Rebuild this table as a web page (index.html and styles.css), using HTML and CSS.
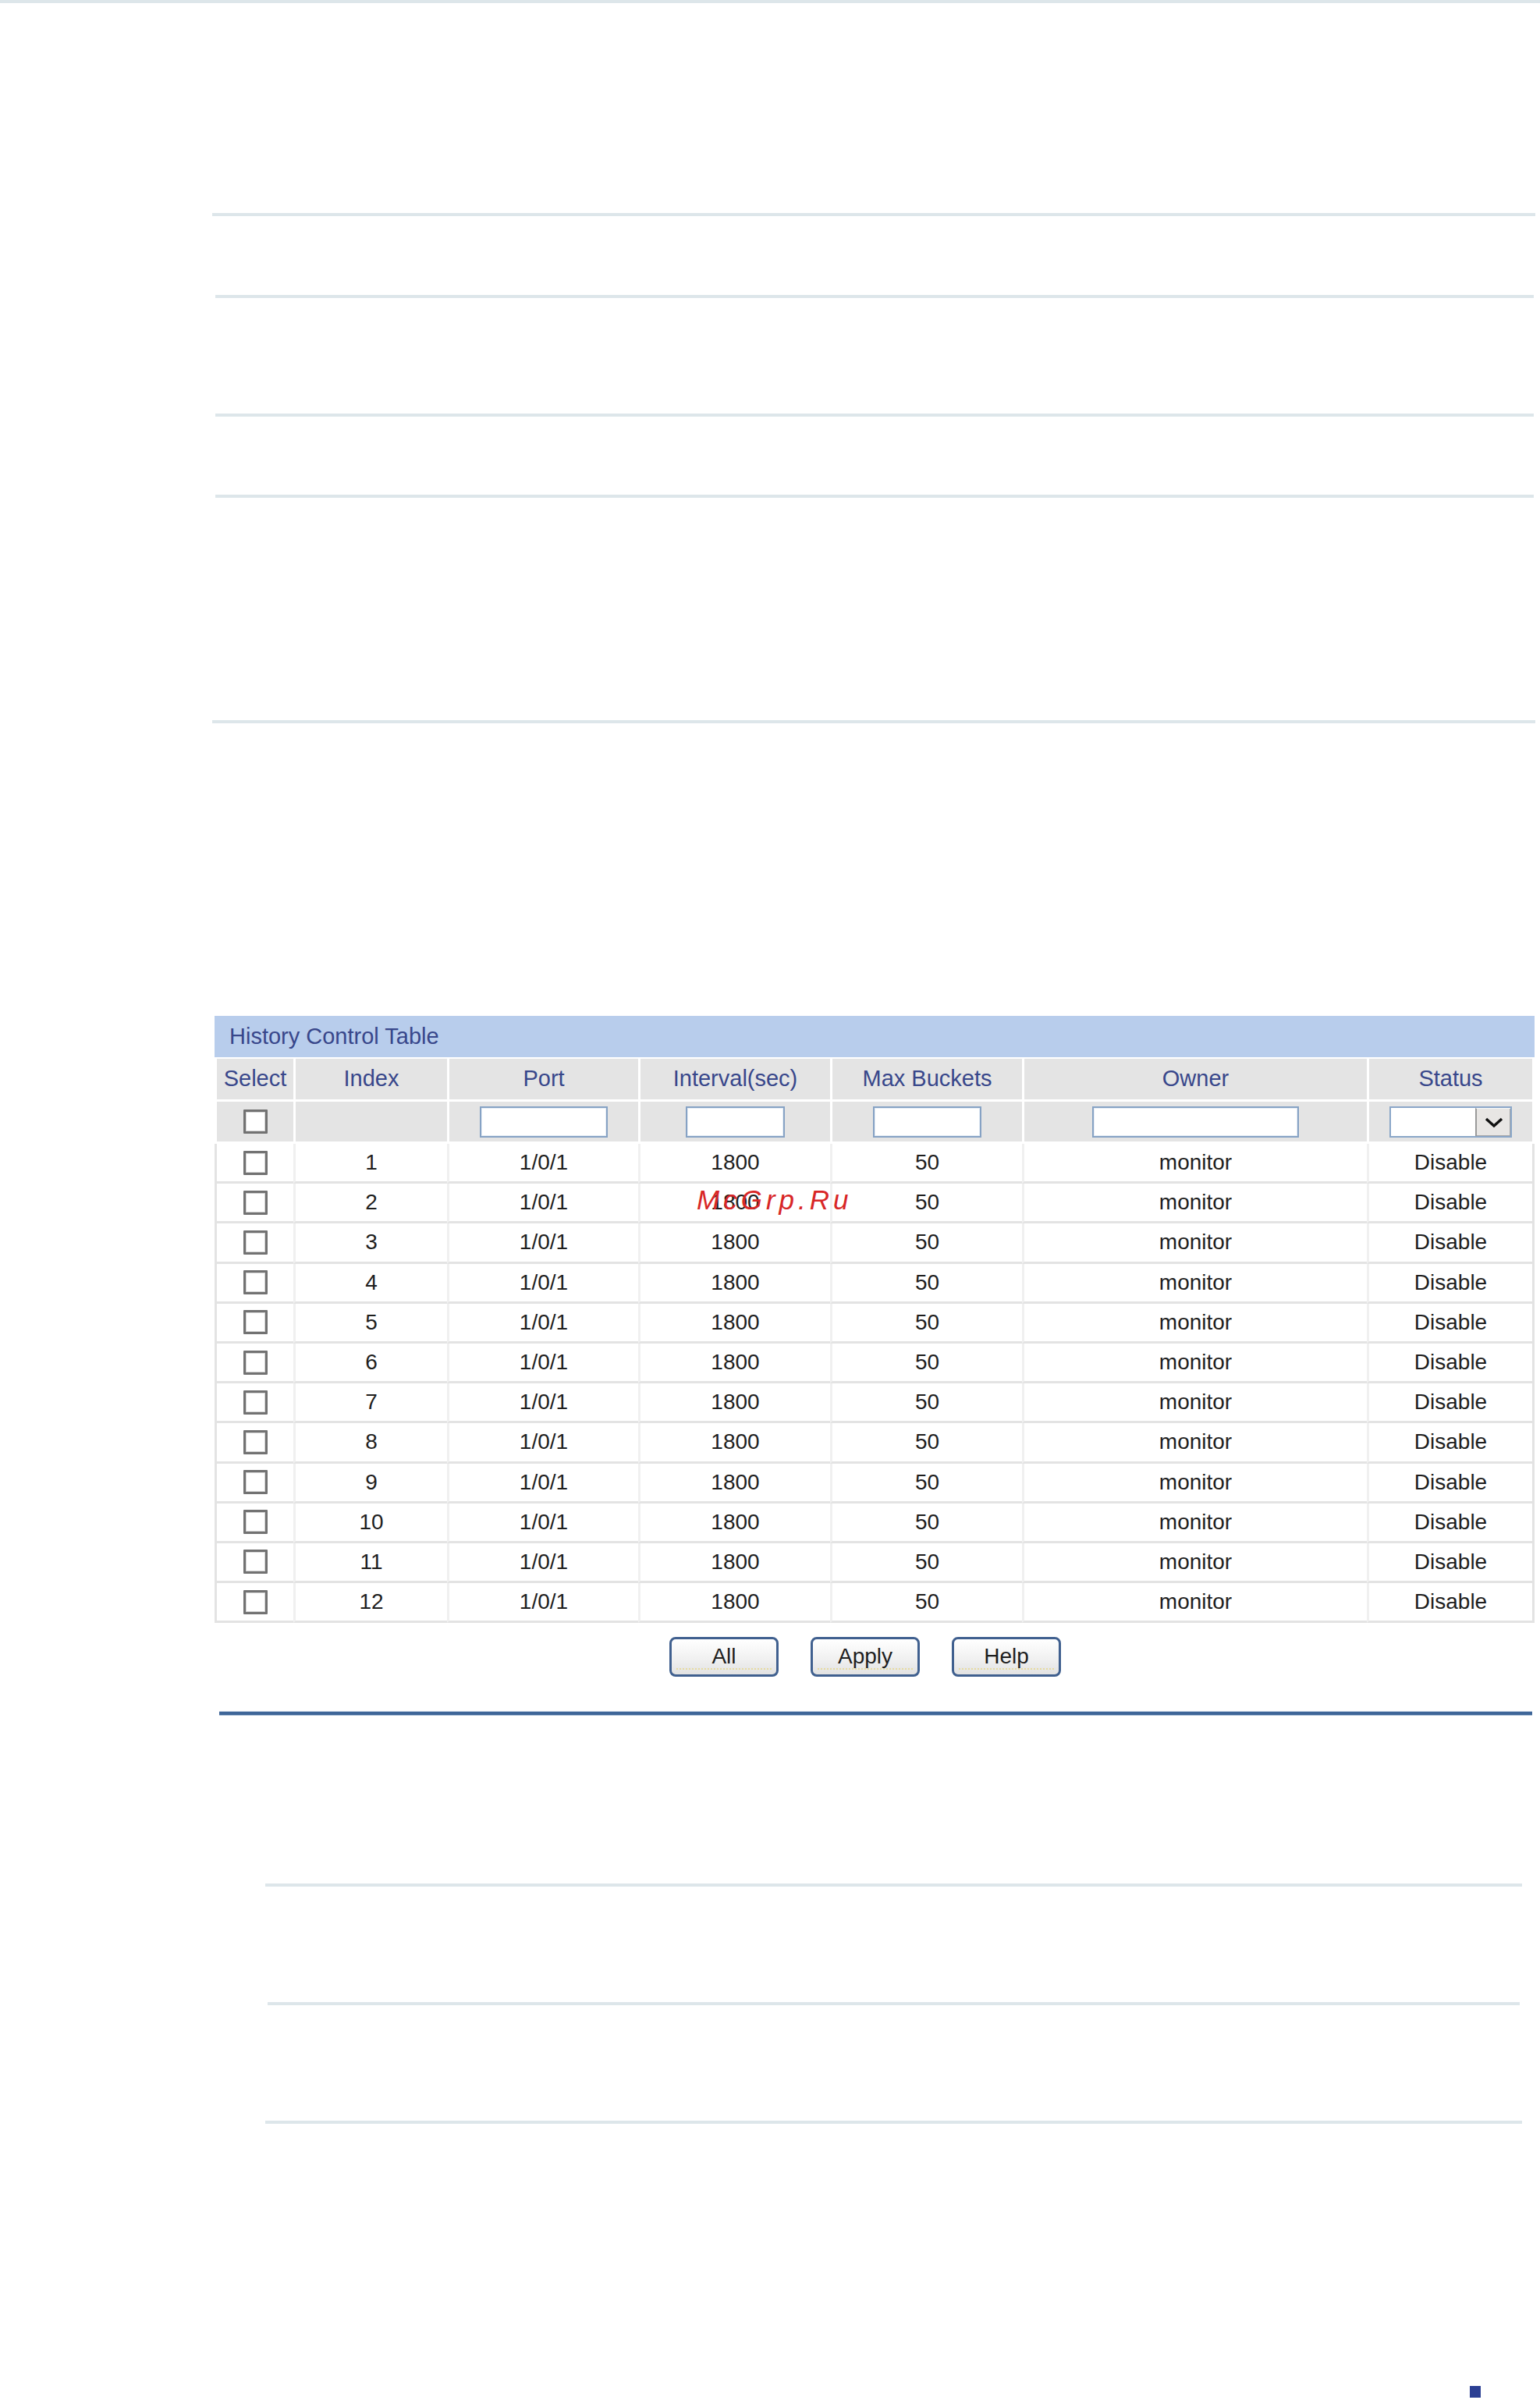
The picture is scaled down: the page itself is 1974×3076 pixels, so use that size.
FILE: index.html
```html
<!DOCTYPE html>
<html lang="en">
<head>
<meta charset="utf-8">
<title>History Control Table</title>
<link rel="stylesheet" href="styles.css">
</head>
<body>
<div class="page">
  <div class="topline"></div>
  <div class="rule rule-1"></div>
  <div class="rule rule-2"></div>
  <div class="rule rule-3"></div>
  <div class="rule rule-4"></div>
  <div class="rule rule-5"></div>

  <section class="panel">
    <div class="panel-title">History Control Table</div>
    <div class="grid">
      <div class="row head">
        <div class="cell">Select</div>
        <div class="cell">Index</div>
        <div class="cell">Port</div>
        <div class="cell">Interval(sec)</div>
        <div class="cell">Max Buckets</div>
        <div class="cell">Owner</div>
        <div class="cell">Status</div>
      </div>
      <div class="row filter">
        <div class="cell"><input type="checkbox" class="cb"></div>
        <div class="cell"></div>
        <div class="cell"><input type="text" class="field f-port"></div>
        <div class="cell"><input type="text" class="field f-interval"></div>
        <div class="cell"><input type="text" class="field f-max"></div>
        <div class="cell"><input type="text" class="field f-owner"></div>
        <div class="cell">
          <div class="select">
            <span class="select-value"></span>
            <span class="select-btn"><svg width="24" height="13" viewBox="0 0 24 13"><path d="M2 2 L12 11 L22 2" fill="none" stroke="#111" stroke-width="3.4"/></svg></span>
          </div>
        </div>
      </div>
      <div class="row data"><div class="cell"><input type="checkbox" class="cb"></div><div class="cell">1</div><div class="cell">1/0/1</div><div class="cell">1800</div><div class="cell">50</div><div class="cell">monitor</div><div class="cell">Disable</div></div>
      <div class="row data"><div class="cell"><input type="checkbox" class="cb"></div><div class="cell">2</div><div class="cell">1/0/1</div><div class="cell">1800</div><div class="cell">50</div><div class="cell">monitor</div><div class="cell">Disable</div></div>
      <div class="row data"><div class="cell"><input type="checkbox" class="cb"></div><div class="cell">3</div><div class="cell">1/0/1</div><div class="cell">1800</div><div class="cell">50</div><div class="cell">monitor</div><div class="cell">Disable</div></div>
      <div class="row data"><div class="cell"><input type="checkbox" class="cb"></div><div class="cell">4</div><div class="cell">1/0/1</div><div class="cell">1800</div><div class="cell">50</div><div class="cell">monitor</div><div class="cell">Disable</div></div>
      <div class="row data"><div class="cell"><input type="checkbox" class="cb"></div><div class="cell">5</div><div class="cell">1/0/1</div><div class="cell">1800</div><div class="cell">50</div><div class="cell">monitor</div><div class="cell">Disable</div></div>
      <div class="row data"><div class="cell"><input type="checkbox" class="cb"></div><div class="cell">6</div><div class="cell">1/0/1</div><div class="cell">1800</div><div class="cell">50</div><div class="cell">monitor</div><div class="cell">Disable</div></div>
      <div class="row data"><div class="cell"><input type="checkbox" class="cb"></div><div class="cell">7</div><div class="cell">1/0/1</div><div class="cell">1800</div><div class="cell">50</div><div class="cell">monitor</div><div class="cell">Disable</div></div>
      <div class="row data"><div class="cell"><input type="checkbox" class="cb"></div><div class="cell">8</div><div class="cell">1/0/1</div><div class="cell">1800</div><div class="cell">50</div><div class="cell">monitor</div><div class="cell">Disable</div></div>
      <div class="row data"><div class="cell"><input type="checkbox" class="cb"></div><div class="cell">9</div><div class="cell">1/0/1</div><div class="cell">1800</div><div class="cell">50</div><div class="cell">monitor</div><div class="cell">Disable</div></div>
      <div class="row data"><div class="cell"><input type="checkbox" class="cb"></div><div class="cell">10</div><div class="cell">1/0/1</div><div class="cell">1800</div><div class="cell">50</div><div class="cell">monitor</div><div class="cell">Disable</div></div>
      <div class="row data"><div class="cell"><input type="checkbox" class="cb"></div><div class="cell">11</div><div class="cell">1/0/1</div><div class="cell">1800</div><div class="cell">50</div><div class="cell">monitor</div><div class="cell">Disable</div></div>
      <div class="row data"><div class="cell"><input type="checkbox" class="cb"></div><div class="cell">12</div><div class="cell">1/0/1</div><div class="cell">1800</div><div class="cell">50</div><div class="cell">monitor</div><div class="cell">Disable</div></div>
    </div>
    <div class="actions">
      <button class="btn" type="button">All</button>
      <button class="btn" type="button">Apply</button>
      <button class="btn" type="button">Help</button>
    </div>
  </section>

  <div class="bluerule"></div>
  <div class="rule rule-6"></div>
  <div class="rule rule-7"></div>
  <div class="rule rule-8"></div>
  <div class="pagemark"></div>

  <span class="watermark">McGrp.Ru</span>
</div>
</body>
</html>
```

FILE: styles.css
```css
html, body {
  margin: 0;
  padding: 0;
  background: #ffffff;
}

body {
  font-family: "Liberation Sans", Arial, sans-serif;
  color: #222222;
}

.page {
  position: relative;
  width: 1974px;
  min-height: 3076px;
  overflow: hidden;
}

.topline {
  height: 4px;
  background: #dde6ea;
}

.rule {
  height: 4px;
  background: #dde6ea;
}

.rule-1 { margin: 269px 0 0 272px; width: 1696px; }
.rule-2 { margin: 101px 0 0 276px; width: 1690px; }
.rule-3 { margin: 148px 0 0 276px; width: 1690px; }
.rule-4 { margin: 100px 0 0 276px; width: 1690px; }
.rule-5 { margin: 285px 0 0 272px; width: 1696px; }

/* ---------- panel ---------- */
.panel {
  margin: 375px 0 0 275px;
  width: 1692px;
}

.panel-title {
  height: 53px;
  line-height: 53px;
  background: #b8cdec;
  color: #38478b;
  font-size: 29px;
  padding-left: 19px;
  margin-bottom: 2px;
}

.row {
  display: grid;
  grid-template-columns: 101px 197px 245px 246px 246px 442px 215px;
}

.cell {
  box-sizing: border-box;
  display: flex;
  align-items: center;
  justify-content: center;
  border-left: 3px solid #ffffff;
  border-bottom: 3px solid #ffffff;
  white-space: nowrap;
}

.cell:last-child {
  border-right: 3px solid #ffffff;
}

.head .cell {
  height: 55px;
  background: #e4e4e4;
  color: #38478b;
  font-size: 29px;
  padding-bottom: 2px;
}

.filter .cell {
  height: 54px;
  background: #e4e4e4;
}

.data .cell {
  height: 51.2px;
  background: #ffffff;
  font-size: 28px;
  color: #1e1e1e;
  border-left-color: #f0f0f0;
  border-bottom-color: #e3e3e3;
}

.data .cell:first-child {
  border-left-color: #e3e3e3;
}

.data .cell:last-child {
  border-right-color: #e3e3e3;
}

/* ---------- form controls ---------- */
.cb {
  -webkit-appearance: none;
  appearance: none;
  box-sizing: border-box;
  width: 31px;
  height: 31px;
  margin: 0;
  border: 3px solid #727272;
  border-radius: 1px;
  background: #ffffff;
  box-shadow: inset 0 0 0 1px #d4d4d4;
}

.field {
  box-sizing: border-box;
  height: 40px;
  margin: 0;
  padding: 0;
  border: 2px solid #86a2c4;
  background: #ffffff;
  box-shadow: inset 0 0 0 1px #e6edf5;
}

.f-port { width: 164px; }
.f-interval { width: 127px; }
.f-max { width: 139px; }
.f-owner { width: 265px; }

.select {
  box-sizing: border-box;
  display: flex;
  width: 157px;
  height: 40px;
  border: 2px solid #8aa6c8;
  background: #ffffff;
}

.select-value {
  flex: 1;
}

.select-btn {
  box-sizing: border-box;
  width: 45px;
  display: flex;
  align-items: center;
  justify-content: center;
  background: #e8e6e4;
  border-left: 2px solid #9a9a9a;
  border-top: 1px solid #f8f8f8;
  box-shadow: inset -1px -1px 0 #a8a8a8;
}

/* ---------- buttons ---------- */
.actions {
  display: flex;
  gap: 41px;
  padding: 18px 0 0 583px;
}

.btn {
  position: relative;
  box-sizing: border-box;
  width: 140px;
  height: 51px;
  margin: 0;
  padding: 0 0 2px;
  font-family: inherit;
  font-size: 28px;
  color: #1e1e1e;
  border: 3px solid #40608f;
  border-radius: 8px;
  background: linear-gradient(#ffffff 0%, #f1f1f1 55%, #e2e2e2 100%);
}

.btn::after {
  content: "";
  position: absolute;
  left: 6px;
  right: 6px;
  bottom: 6px;
  border-top: 2px dotted #e7dba0;
}

/* ---------- lower section ---------- */
.bluerule {
  margin: 44px 0 0 281px;
  width: 1683px;
  height: 6px;
  background: linear-gradient(#b3c4da 0, #b3c4da 1px, #3f6699 1px, #3f6699 5px, #b3c4da 5px);
}

.rule-6 { margin: 215px 0 0 340px; width: 1611px; }
.rule-7 { margin: 148px 0 0 343px; width: 1605px; }
.rule-8 { margin: 148px 0 0 340px; width: 1611px; }

.pagemark {
  margin: 336px 0 0 1884px;
  width: 14px;
  height: 15px;
  background: #2b3f93;
}

/* ---------- overlay watermark ---------- */
.watermark {
  position: absolute;
  left: 893px;
  top: 1520px;
  font-family: "Liberation Sans", Arial, sans-serif;
  font-style: italic;
  font-size: 35px;
  line-height: 35px;
  letter-spacing: 5px;
  color: #d82626;
}
```
